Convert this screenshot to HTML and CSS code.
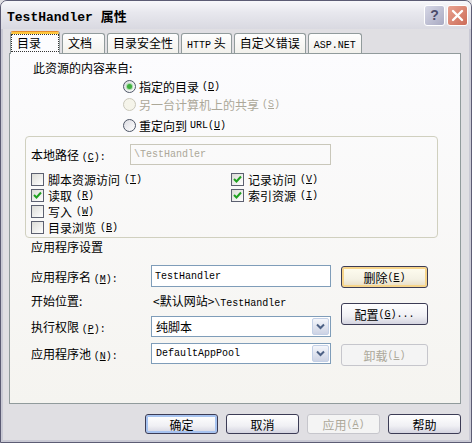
FILE: index.html
```html
<!DOCTYPE html>
<html lang="zh-CN">
<head>
    <meta charset="UTF-8">
    <title>TestHandler 属性</title>
    <link rel="stylesheet" href="styles.css">
</head>
<body>
<div class="window">
    <div class="title_bar">
        <span class="title"><span class="en">TestHandler </span>属性</span>
        <span class="title_btns">
            <span class="btn_help">?</span>
            <span class="btn_close">
                <svg width="13" height="13" viewBox="0 0 13 13"><path d="M2 2L11 11M11 2L2 11" stroke="#fff" stroke-width="2.4" stroke-linecap="round"/></svg>
            </span>
        </span>
    </div>

    <div class="dlg_body">
        <!--选项卡-->
        <div class="tabs">
            <div class="tab tab_on"><span class="focus">目录</span></div>
            <div class="tab">文档</div>
            <div class="tab">目录安全性</div>
            <div class="tab"><span class="en">HTTP</span> 头</div>
            <div class="tab">自定义错误</div>
            <div class="tab"><span class="en">ASP.NET</span></div>
        </div>

        <div class="page">
            <p class="src_title">此资源的内容来自:</p>

            <div class="radio_list">
                <div class="radio_row r1"><span class="radio on"></span>指定的目录 <span class="en">(<u>D</u>)</span></div>
                <div class="radio_row r2 off"><span class="radio"></span>另一台计算机上的共享 <span class="en">(<u>S</u>)</span></div>
                <div class="radio_row r3"><span class="radio"></span>重定向到 <span class="en">URL(<u>U</u>)</span></div>
            </div>

            <div class="group">
                <div class="path_row">
                    <span class="path_label">本地路径 <span class="en">(<u>C</u>):</span></span>
                    <span class="text_box box_off"><span class="en">\TestHandler</span></span>
                </div>
                <div class="checks">
                    <div class="check_row"><span class="check"></span>脚本资源访问 <span class="en">(<u>T</u>)</span></div>
                    <div class="check_row"><span class="check"><svg width="11" height="11" viewBox="0 0 11 11"><path d="M2 5l2.5 2.5L9 2.5" fill="none" stroke="#21a121" stroke-width="2"/></svg></span>读取 <span class="en">(<u>R</u>)</span></div>
                    <div class="check_row"><span class="check"></span>写入 <span class="en">(<u>W</u>)</span></div>
                    <div class="check_row"><span class="check"></span>目录浏览 <span class="en">(<u>B</u>)</span></div>
                    <div class="check_row"><span class="check"><svg width="11" height="11" viewBox="0 0 11 11"><path d="M2 5l2.5 2.5L9 2.5" fill="none" stroke="#21a121" stroke-width="2"/></svg></span>记录访问 <span class="en">(<u>V</u>)</span></div>
                    <div class="check_row"><span class="check"><svg width="11" height="11" viewBox="0 0 11 11"><path d="M2 5l2.5 2.5L9 2.5" fill="none" stroke="#21a121" stroke-width="2"/></svg></span>索引资源 <span class="en">(<u>I</u>)</span></div>
                </div>
            </div>

            <p class="app_title">应用程序设置</p>

            <div class="app_area">
                <div class="app_fields">
                    <div class="field_row f1">
                        <span class="field_label">应用程序名 <span class="en">(<u>M</u>):</span></span>
                        <span class="text_box"><span class="en">TestHandler</span></span>
                    </div>
                    <div class="field_row f2">
                        <span class="field_label">开始位置:</span>
                        <span class="start_val">&lt;默认网站&gt;<span class="en">\TestHandler</span></span>
                    </div>
                    <div class="field_row f3">
                        <span class="field_label">执行权限 <span class="en">(<u>P</u>):</span></span>
                        <span class="select"><span class="sel_text">纯脚本</span><span class="sel_btn"><svg width="9" height="7" viewBox="0 0 9 7"><path d="M1 1.5l3.5 3.5L8 1.5" fill="none" stroke="#4d6185" stroke-width="2"/></svg></span></span>
                    </div>
                    <div class="field_row f4">
                        <span class="field_label">应用程序池 <span class="en">(<u>N</u>):</span></span>
                        <span class="select"><span class="sel_text en">DefaultAppPool</span><span class="sel_btn"><svg width="9" height="7" viewBox="0 0 9 7"><path d="M1 1.5l3.5 3.5L8 1.5" fill="none" stroke="#4d6185" stroke-width="2"/></svg></span></span>
                    </div>
                </div>
                <div class="app_btns">
                    <span class="btn btn_hot b1">删除 <span class="en">(<u>E</u>)</span></span>
                    <span class="btn b2">配置 <span class="en">(<u>G</u>)...</span></span>
                    <span class="btn btn_off b3">卸载 <span class="en">(<u>L</u>)</span></span>
                </div>
            </div>
        </div>

        <div class="footer">
            <span class="btn btn_def">确定</span>
            <span class="btn">取消</span>
            <span class="btn btn_off">应用 <span class="en">(<u>A</u>)</span></span>
            <span class="btn">帮助</span>
        </div>
    </div>
</div>
</body>
</html>
```

FILE: styles.css
```css
*{
    box-sizing: border-box;
}
body{
    margin: 0;
    font-family: "Noto Sans CJK SC", sans-serif;
    font-size: 12px;
    color: #000;
    background: #e0dfe3;
}
p{
    margin: 0;
}
/*英文部分用等宽字体*/
.en{
    font-family: "Liberation Mono", monospace;
    font-size: 10px;
}

.window{
    width: 472px;
    height: 443px;
    border: 1px solid #5c5c74;
    border-radius: 7px 7px 0 0;
    background: #e0dfe3;
    box-shadow: inset 0 0 0 2px #c9c9d4;
    overflow: hidden;
}

/*标题栏*/
.title_bar{
    height: 28px;
    display: flex;
    align-items: center;
    justify-content: space-between;
    padding: 0 3px 0 6px;
    background: linear-gradient(#f8f8fb, #e8e8ee 40%, #d9d9e1);
}
.title{
    font-size: 13px;
    font-weight: bold;
}
.title .en{
    font-size: 13px;
    font-weight: bold;
}
.title_btns{
    display: flex;
    gap: 2px;
}
.btn_help,.btn_close{
    width: 21px;
    height: 21px;
    border: 1px solid #fff;
    border-radius: 3px;
    display: flex;
    align-items: center;
    justify-content: center;
}
.btn_help{
    background: linear-gradient(135deg, #d6d7e6, #a9aac2);
    color: #4c4c6a;
    font-family: "Liberation Sans", sans-serif;
    font-weight: bold;
    font-size: 14px;
}
.btn_close{
    background: linear-gradient(135deg, #e9a291, #cc6c58);
}

.dlg_body{
    padding: 2px 10px 0 8px;
}

/*选项卡*/
.tabs{
    display: flex;
    align-items: flex-end;
    margin-bottom: -1px;
    position: relative;
    z-index: 1;
}
.tab{
    height: 20px;
    min-width: 43px;
    margin: 0 0 1px 2px;
    padding: 0 5px;
    line-height: 18px;
    border: 1px solid #919b9c;
    border-bottom: none;
    border-radius: 3px 3px 0 0;
    background: linear-gradient(#fefefe, #f2f1ec);
}
.tab_on{
    width: 50px;
    height: 23px;
    margin: 0 0 0 1px;
    padding: 0;
    border-top: 1px solid #e68b2c;
    box-shadow: inset 0 2px #ffc83c;
    background: #fcfcfe;
}
.focus{
    display: block;
    height: 18px;
    margin-top: 2px;
    padding-left: 5px;
    line-height: 16px;
    border: 1px dotted #333;
}

.page{
    height: 351px;
    border: 1px solid #919b9c;
    background: linear-gradient(#fcfcfe, #f5f4f0);
}

.src_title{
    margin: 7px 0 0 23px;
    line-height: 14px;
}

/*单选按钮*/
.radio_list{
    margin-left: 113px;
}
.radio_row{
    display: flex;
    align-items: center;
    gap: 3px;
    height: 15px;
}
.r1{ margin-top: 4px; }
.r2{ margin-top: 3px; }
.r3{ margin-top: 6px; }
.radio{
    width: 13px;
    height: 13px;
    border: 1px solid #4d5566;
    border-radius: 50%;
    background: linear-gradient(135deg, #dcdce2, #fff);
    display: flex;
    align-items: center;
    justify-content: center;
}
.radio.on::after{
    content: "";
    width: 5px;
    height: 5px;
    border-radius: 50%;
    background: #3fae3f;
    box-shadow: 0 0 1px 1px #a6dca6;
}
.off{
    color: #aca899;
}
.off .radio{
    border-color: #cac8bb;
    background: #f5f4ea;
}

/*分组框*/
.group{
    width: 413px;
    height: 102px;
    margin: 3px 0 0 15px;
    padding-left: 5px;
    border: 1px solid #d0d0bf;
    border-radius: 4px;
}
.path_row{
    display: flex;
    align-items: center;
    margin-top: 7px;
}
.path_label{
    width: 99px;
}
.text_box{
    width: 180px;
    height: 22px;
    padding-left: 3px;
    display: flex;
    align-items: center;
    border: 1px solid #7f9db9;
    background: #fff;
}
.box_off{
    width: 201px;
    height: 21px;
    border-color: #c9c7ba;
    background: transparent;
    color: #aca899;
}

.checks{
    display: grid;
    grid-template-columns: 200px 200px;
    grid-template-rows: repeat(4, 16px);
    grid-auto-flow: column;
    margin-top: 6px;
}
.check_row{
    display: flex;
    align-items: center;
    gap: 4px;
}
.check{
    width: 13px;
    height: 13px;
    border: 1px solid #5c6070;
    background: linear-gradient(135deg, #dcdcd7, #fff);
    display: flex;
    align-items: center;
    justify-content: center;
}

/*应用程序设置*/
.app_title{
    margin: 2px 0 0 21px;
    line-height: 14px;
}
.app_area{
    display: flex;
    gap: 10px;
    margin: 11px 0 0 21px;
}
.field_row{
    display: flex;
    align-items: center;
}
.f1{ height: 22px; }
.f2{ height: 23px; margin-top: 2px; }
.f3{ height: 21px; margin-top: 4px; }
.f4{ height: 21px; margin-top: 6px; }
.field_label{
    width: 120px;
}
.start_val{
    padding-left: 2px;
}
.select{
    width: 180px;
    height: 21px;
    display: flex;
    align-items: center;
    justify-content: space-between;
    padding: 1px;
    border: 1px solid #7f9db9;
    background: #fff;
}
.sel_text{
    padding-left: 3px;
}
.sel_btn{
    width: 17px;
    height: 17px;
    display: flex;
    align-items: center;
    justify-content: center;
    border: 1px solid #c3d0e6;
    border-radius: 2px;
    background: linear-gradient(#f4f6fb, #cdd3e4);
}

.app_btns{
    display: flex;
    flex-direction: column;
}
.b1{ margin-top: 1px; height: 21px; }
.b2{ margin-top: 15px; }
.b3{ margin-top: 19px; }

/*按钮*/
.btn{
    width: 87px;
    height: 22px;
    display: flex;
    align-items: center;
    justify-content: center;
    border: 1px solid #3c3c55;
    border-radius: 3px;
    background: linear-gradient(#ffffff, #f0f0f4 60%, #d4d4e0);
}
.btn_hot{
    box-shadow: inset 0 0 0 2px #f7d58a;
    background: linear-gradient(#fffdf0, #f4f1e4 60%, #e8dcc0);
}
.btn_def{
    box-shadow: inset 0 0 0 2px #a7c3f0;
}
.btn_off{
    border-color: #c6c6cc;
    background: #f4f4f4;
    color: #aca899;
}

.footer{
    display: flex;
    justify-content: flex-end;
    gap: 8px;
    margin-top: 10px;
}
.footer .btn{
    width: 73px;
    height: 20px;
}
```
